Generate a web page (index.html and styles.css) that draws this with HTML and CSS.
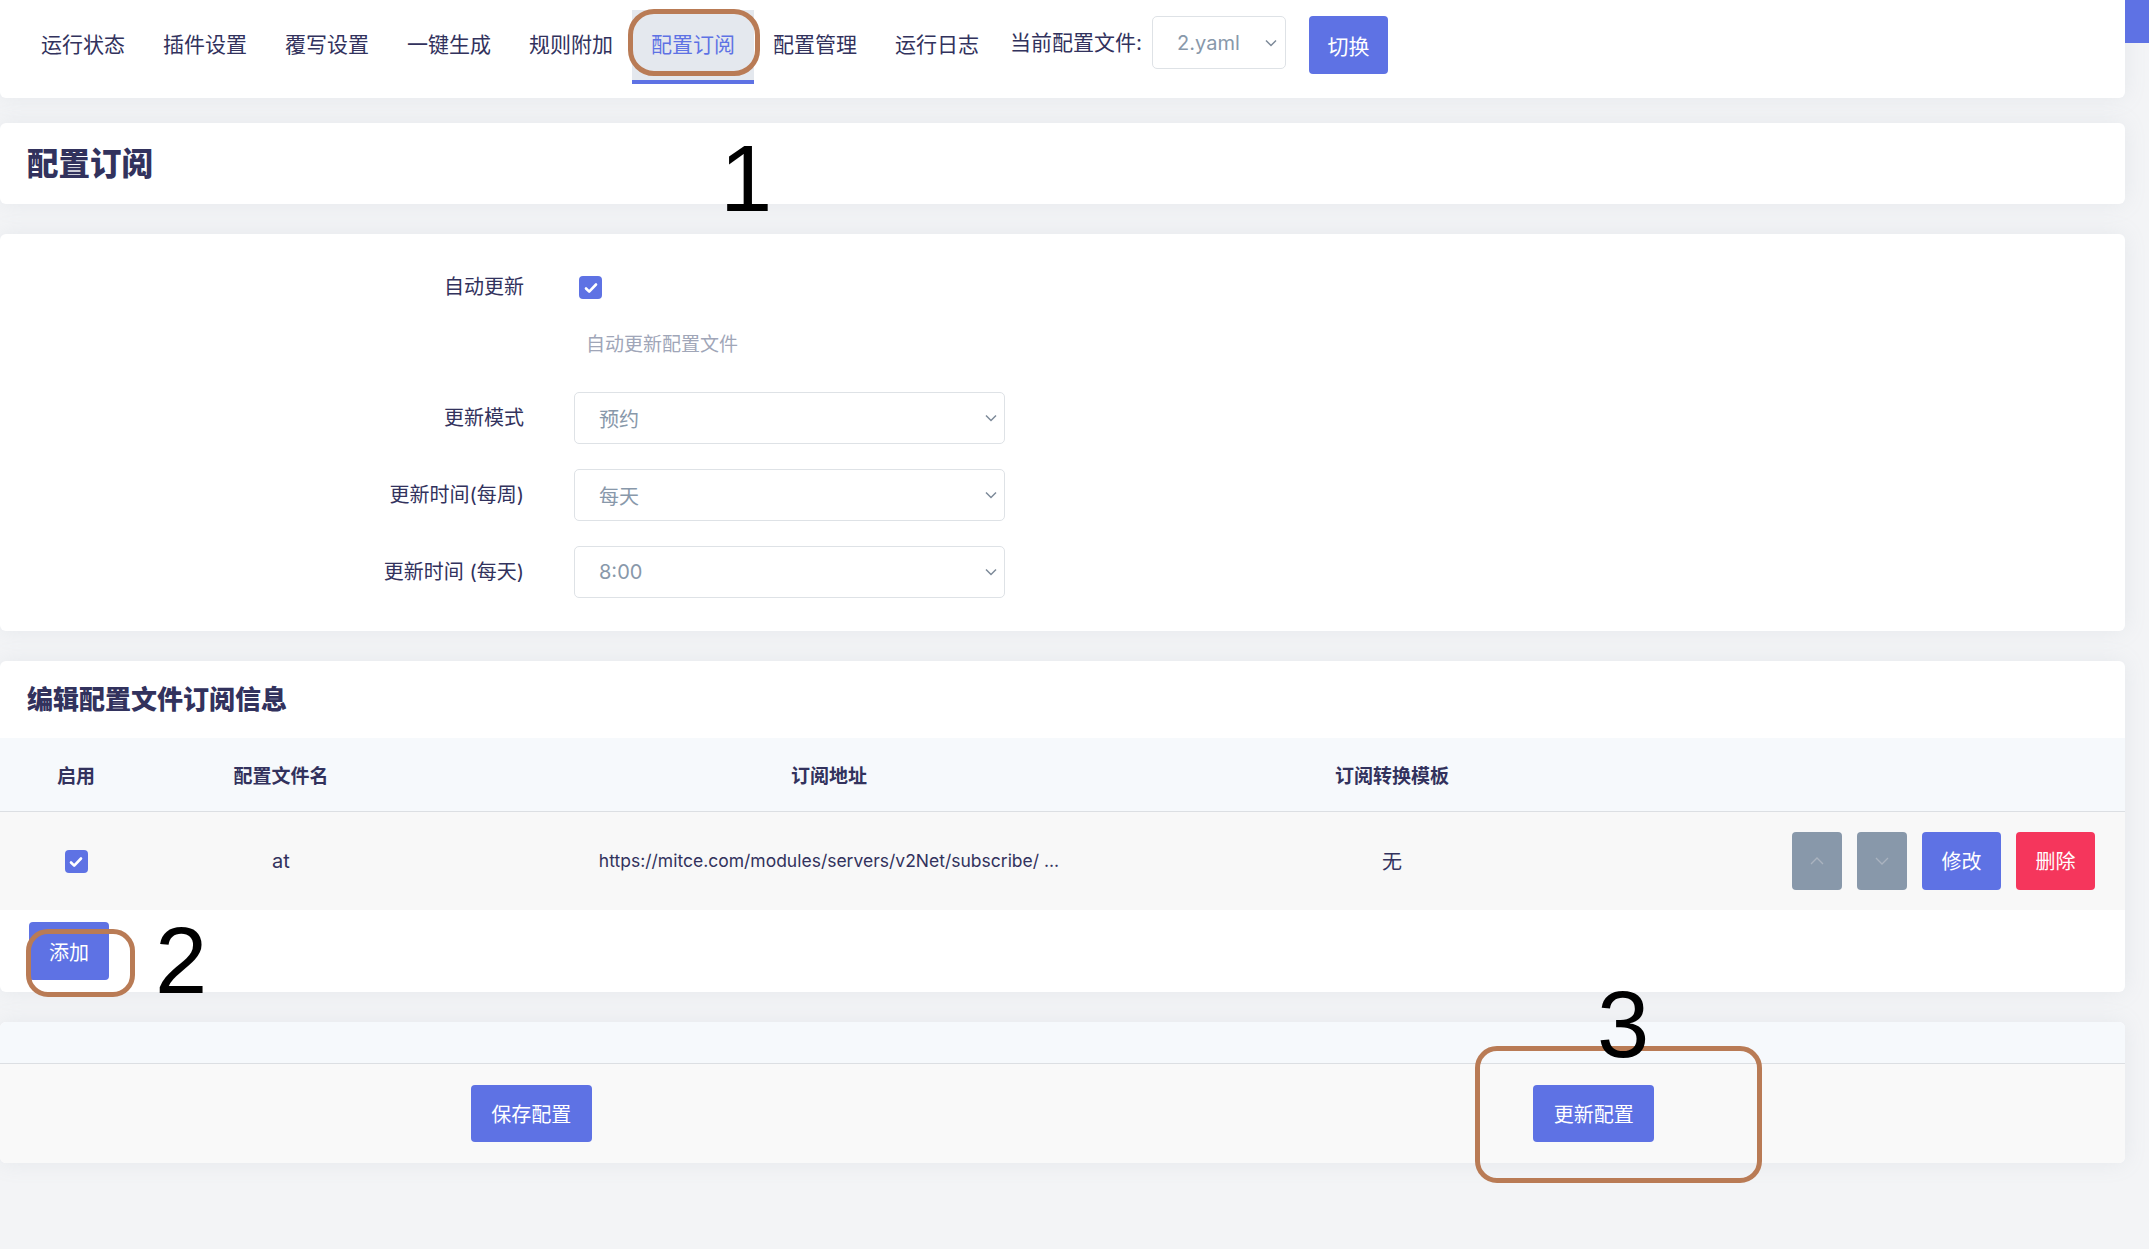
FILE: index.html
```html
<!DOCTYPE html>
<html lang="zh-CN">
<head>
<meta charset="utf-8">
<title>配置订阅</title>
<link rel="stylesheet" href="styles.css">
</head>
<body>
<div class="page">
  <main class="main">
    <nav class="card nav">
      <a class="nav-item">运行状态</a>
      <a class="nav-item">插件设置</a>
      <a class="nav-item">覆写设置</a>
      <a class="nav-item">一键生成</a>
      <a class="nav-item">规则附加</a>
      <a class="nav-item active">配置订阅</a>
      <a class="nav-item">配置管理</a>
      <a class="nav-item">运行日志</a>
      <div class="switcher">
        <span class="switcher-label">当前配置文件:</span>
        <div class="select select-sm"><span>2.yaml</span><svg width="12" height="8" viewBox="0 0 12 8"><path d="M1 1.5l5 5 5-5" fill="none" stroke="#7d8a99" stroke-width="1.5"/></svg></div>
        <button class="btn btn-primary btn-switch">切换</button>
      </div>
    </nav>

    <section class="card header-card">
      <h1 class="page-title">配置订阅</h1>
    </section>

    <section class="card form-card">
      <div class="form-row row-check">
        <span class="form-label">自动更新</span>
        <span class="checkbox"><svg width="14" height="12" viewBox="0 0 14 12"><path d="M2 6.5l3.2 3.2L12 2.5" fill="none" stroke="#fff" stroke-width="2.6" stroke-linecap="round" stroke-linejoin="round"/></svg></span>
      </div>
      <div class="help">自动更新配置文件</div>
      <div class="form-row sel-row first">
        <span class="form-label">更新模式</span>
        <div class="select select-lg"><span>预约</span><svg width="12" height="8" viewBox="0 0 12 8"><path d="M1 1.5l5 5 5-5" fill="none" stroke="#7d8a99" stroke-width="1.5"/></svg></div>
      </div>
      <div class="form-row sel-row">
        <span class="form-label">更新时间(每周)</span>
        <div class="select select-lg"><span>每天</span><svg width="12" height="8" viewBox="0 0 12 8"><path d="M1 1.5l5 5 5-5" fill="none" stroke="#7d8a99" stroke-width="1.5"/></svg></div>
      </div>
      <div class="form-row sel-row">
        <span class="form-label">更新时间 (每天)</span>
        <div class="select select-lg"><span>8:00</span><svg width="12" height="8" viewBox="0 0 12 8"><path d="M1 1.5l5 5 5-5" fill="none" stroke="#7d8a99" stroke-width="1.5"/></svg></div>
      </div>
    </section>

    <section class="card table-card">
      <h2 class="section-title">编辑配置文件订阅信息</h2>
      <table class="sub-table">
        <colgroup>
          <col class="c1"><col class="c2"><col class="c3"><col class="c4"><col class="c5">
        </colgroup>
        <thead>
          <tr><th>启用</th><th>配置文件名</th><th>订阅地址</th><th>订阅转换模板</th><th></th></tr>
        </thead>
        <tbody>
          <tr>
            <td><span class="checkbox"><svg width="14" height="12" viewBox="0 0 14 12"><path d="M2 6.5l3.2 3.2L12 2.5" fill="none" stroke="#fff" stroke-width="2.6" stroke-linecap="round" stroke-linejoin="round"/></svg></span></td>
            <td>at</td>
            <td class="url">https://mitce.com/modules/servers/v2Net/subscribe/ ...</td>
            <td>无</td>
            <td class="actions">
              <button class="btn btn-gray"><svg width="14" height="8" viewBox="0 0 14 8"><path d="M1 7l6-6 6 6" fill="none" stroke="#aab3bf" stroke-width="1.3"/></svg></button>
              <button class="btn btn-gray"><svg width="14" height="8" viewBox="0 0 14 8"><path d="M1 1l6 6 6-6" fill="none" stroke="#aab3bf" stroke-width="1.3"/></svg></button>
              <button class="btn btn-primary btn-row">修改</button>
              <button class="btn btn-danger btn-row">删除</button>
            </td>
          </tr>
        </tbody>
      </table>
      <div class="add-wrap"><button class="btn btn-primary btn-add">添加</button></div>
    </section>

    <section class="card footer-card">
      <div class="footer-head"></div>
      <div class="footer-body">
        <div class="footer-cell"><button class="btn btn-primary btn-foot">保存配置</button></div>
        <div class="footer-cell"><button class="btn btn-primary btn-foot">更新配置</button></div>
      </div>
    </section>
  </main>
  <div class="rail"><div class="thumb"></div></div>

  <div class="anno-box box1"></div>
  <div class="anno-box box2"></div>
  <div class="anno-box box3"></div>
  <div class="anno-num n1">1</div>
  <div class="anno-num n2">2</div>
  <div class="anno-num n3">3</div>
</div>
</body>
</html>
```

FILE: styles.css
```css
* { box-sizing: border-box; }

body {
  margin: 0;
  background: #f3f4f6;
  font-family: "Inter", "Noto Sans CJK SC", sans-serif;
  color: #32325d;
}

.page {
  position: relative;
  display: flex;
  min-height: 1249px;
}

.main {
  width: 2125px;
  flex: none;
}

.rail { flex: 1; }
.thumb { height: 43px; background: #5e72e4; }

.card {
  background: #fff;
  border-radius: 6px;
  box-shadow: 0 0 22px rgba(136, 152, 170, 0.13);
}

/* nav */
.nav {
  display: flex;
  align-items: flex-start;
  padding: 10px 0 14px 22px;
  border-radius: 0 0 6px 6px;
  margin-bottom: 25px;
}

.nav-item {
  height: 74px;
  line-height: 70px;
  padding: 0 19px;
  font-size: 21px;
  color: #32325d;
  border-bottom: 4px solid transparent;
  text-decoration: none;
  white-space: nowrap;
}

.nav-item.active {
  background: #e4e8ee;
  color: #5e72e4;
  border-bottom-color: #5e72e4;
}

.switcher {
  display: flex;
  align-items: flex-start;
  margin-left: 12px;
  margin-top: 6px;
}

.switcher-label {
  font-size: 21px;
  line-height: 53px;
  color: #32325d;
  white-space: nowrap;
}

.select {
  display: flex;
  align-items: center;
  justify-content: space-between;
  border: 1px solid #dee2e6;
  border-radius: 5px;
  background: #fff;
  color: #8898aa;
  font-size: 20px;
}

.select-sm {
  width: 134px;
  height: 53px;
  margin-left: 10px;
  padding: 0 8px 0 24px;
}

.btn {
  border: none;
  border-radius: 4px;
  color: #fff;
  font-family: inherit;
  font-size: 20px;
  padding: 0 20px;
  height: 58px;
  cursor: pointer;
  vertical-align: middle;
}

.btn-primary { background: #5e72e4; }
.btn-danger { background: #f5365c; }
.btn-gray {
  background: #8898aa;
  width: 50px;
  padding: 0;
  display: inline-flex;
  align-items: center;
  justify-content: center;
}

.btn-switch {
  margin-left: 23px;
  width: 79px;
  padding: 0;
  font-size: 21px;
}

/* header */
.header-card {
  height: 81px;
  display: flex;
  align-items: center;
  padding: 0 27px;
  margin-bottom: 30px;
}

.page-title {
  margin: 0;
  font-size: 31.5px;
  line-height: 40px;
  font-weight: 800;
  color: #32325d;
}

/* form */
.form-card {
  padding: 42px 0 33px;
  margin-bottom: 30px;
}

.form-row {
  display: flex;
  align-items: center;
}

.form-label {
  width: 524px;
  text-align: right;
  font-size: 20px;
  line-height: 23px;
  color: #32325d;
  white-space: nowrap;
}

.row-check { height: 23px; }

.checkbox {
  display: inline-flex;
  align-items: center;
  justify-content: center;
  width: 23px;
  height: 23px;
  border-radius: 4px;
  background: #5e72e4;
  vertical-align: middle;
}

.row-check .checkbox { margin-left: 55px; }

.help {
  padding-left: 586px;
  margin-top: 35px;
  line-height: 22px;
  font-size: 19px;
  color: #a0a6b8;
}

.sel-row { margin-top: 25px; }
.sel-row.first { margin-top: 36px; }

.select-lg {
  width: 431px;
  height: 52px;
  margin-left: 50px;
  padding: 0 7px 0 24px;
}

/* table card */
.table-card {
  margin-bottom: 30px;
}

.section-title {
  margin: 0;
  height: 77px;
  line-height: 77px;
  padding-left: 27px;
  font-size: 26px;
  font-weight: 800;
  color: #32325d;
}

.sub-table {
  width: 100%;
  border-collapse: collapse;
  table-layout: fixed;
}

.c1 { width: 152px; }
.c2 { width: 258px; }
.c3 { width: 838px; }
.c4 { width: 288px; }

.sub-table th {
  height: 73px;
  padding: 0;
  background: #f6f9fc;
  border-bottom: 1px solid #dcdfe3;
  font-size: 19px;
  font-weight: 700;
  color: #32325d;
  text-align: center;
}

.sub-table td {
  height: 99px;
  padding: 0;
  background: #f8f8f8;
  text-align: center;
  font-size: 20px;
  color: #32325d;
}

.sub-table td.url {
  font-size: 17.5px;
  white-space: nowrap;
}

.sub-table td.actions {
  text-align: right;
  padding-right: 30px;
  white-space: nowrap;
  font-size: 0;
}

.actions .btn + .btn { margin-left: 15px; }

.btn-row {
  width: 79px;
  padding: 0;
  font-size: 20px;
}

.add-wrap { padding: 12px 29px; }

.btn-add {
  width: 80px;
  padding: 0;
}

/* footer card */
.footer-card { overflow: hidden; }

.footer-head {
  height: 42px;
  background: #f6f9fc;
  border-bottom: 1px solid #dcdfe3;
}

.footer-body {
  display: flex;
  height: 99px;
  background: #f9f9f9;
}

.footer-cell {
  flex: 1;
  display: flex;
  align-items: center;
  justify-content: center;
}

.btn-foot {
  height: 57px;
  width: 121px;
  padding: 0;
}

/* annotations */
.anno-box {
  position: absolute;
  border: 5px solid #b97b55;
  border-radius: 22px;
  z-index: 5;
}

.box1 { left: 628px; top: 9px; width: 132px; height: 67px; border-radius: 26px; }
.box2 { left: 26px; top: 929px; width: 109px; height: 68px; }
.box3 { left: 1475px; top: 1046px; width: 287px; height: 137px; }

.anno-num {
  position: absolute;
  font-family: "Liberation Sans", sans-serif;
  font-size: 94px;
  line-height: 1;
  color: #000;
  z-index: 6;
}

.n1 { left: 720px; top: 132px; }
.n2 { left: 155px; top: 914px; }
.n3 { left: 1597px; top: 978px; }
```
